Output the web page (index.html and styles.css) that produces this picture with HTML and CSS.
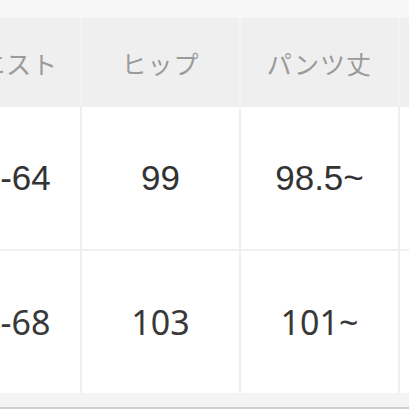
FILE: index.html
```html
<!DOCTYPE html>
<html lang="ja">
<head>
<meta charset="utf-8">
<link rel="stylesheet" href="styles.css">
</head>
<body>
<div class="page">
  <div class="topbar"></div>
  <div class="viewport">
    <table class="size-table">
      <thead>
        <tr>
          <th>ウエスト</th>
          <th>ヒップ</th>
          <th>パンツ丈</th>
          <th></th>
        </tr>
      </thead>
      <tbody>
        <tr>
          <td>60-64</td>
          <td>99</td>
          <td>98.5~</td>
          <td></td>
        </tr>
        <tr class="alt">
          <td>64-68</td>
          <td>103</td>
          <td>101~</td>
          <td></td>
        </tr>
      </tbody>
    </table>
  </div>
  <div class="bottombar"></div>
</div>
</body>
</html>
```
FILE: styles.css
```css
html, body {
  margin: 0;
  padding: 0;
  background: #ffffff;
}
.page {
  width: 409px;
  height: 409px;
  overflow: hidden;
  display: flex;
  flex-direction: column;
}
.topbar {
  height: 18px;
  background: #f7f7f7;
  flex: none;
}
.viewport {
  overflow: hidden;
  flex: none;
}
.size-table {
  border-collapse: collapse;
  table-layout: fixed;
  width: 623px;
  margin-left: -68px;
}
.size-table th,
.size-table td {
  width: 157px;
  text-align: center;
  vertical-align: middle;
  padding: 0;
  border-left: 2px solid #efefef;
}
.size-table th:first-child,
.size-table td:first-child {
  width: 148px;
  border-left: none;
}
.size-table th {
  height: 89px;
  background: #efefef;
  border-left-color: #f3f3f3;
  color: #9a9a9a;
  font-family: "Noto Sans CJK JP", "Noto Sans", sans-serif;
  font-size: 25px;
  font-weight: 400;
  letter-spacing: 1px;
}
.size-table td {
  height: 142px;
  color: #333333;
  font-family: "Liberation Sans", Arial, sans-serif;
  font-size: 35px;
}
.size-table tbody tr + tr td {
  border-top: 2px solid #efefef;
}
.size-table tr.alt td {
  font-family: "Noto Sans", "Liberation Sans", sans-serif;
  font-size: 34px;
  color: #383838;
}
.bottombar {
  height: 14px;
  background: #f4f4f4;
  border-bottom: 2px solid #d0d0d0;
  flex: none;
}
```
